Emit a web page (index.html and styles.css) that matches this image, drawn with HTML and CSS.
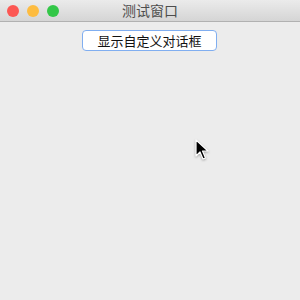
FILE: index.html
```html
<!DOCTYPE html>
<html>
<head>
<meta charset="utf-8">
<link rel="stylesheet" href="styles.css">
</head>
<body>
<div class="window">
  <div class="titlebar">
    <div class="lights">
      <span class="light red"></span>
      <span class="light yellow"></span>
      <span class="light green"></span>
    </div>
    <div class="title">测试窗口</div>
  </div>
  <div class="content">
    <button class="btn">显示自定义对话框</button>
  </div>
  <svg class="cursor" width="14" height="22" viewBox="0 0 14 22">
    <path d="M1 1 L1 17 L5 13 L8 20 L10.5 19 L7.5 12 L13 12 Z" fill="#000" stroke="#fff" stroke-width="1.2" stroke-linejoin="round"/>
  </svg>
</div>
</body>
</html>
```
FILE: styles.css
```css
html, body {
  margin: 0;
  padding: 0;
  background: #ececec;
}
.window {
  position: relative;
  width: 300px;
  height: 300px;
  background: #ececec;
  font-family: "Noto Sans CJK SC", "Noto Sans", sans-serif;
}
.titlebar {
  position: relative;
  height: 21px;
  background: linear-gradient(#ebebeb, #d5d5d5);
  border-bottom: 1px solid #b1b1b1;
  display: flex;
  align-items: center;
  justify-content: center;
}
.lights {
  position: absolute;
  left: 7px;
  top: 5px;
  display: flex;
  gap: 8px;
}
.light {
  width: 12px;
  height: 12px;
  border-radius: 50%;
  display: block;
}
.red { background: #fc5753; }
.yellow { background: #fdbc40; }
.green { background: #33c748; }
.title {
  font-size: 14px;
  color: #4d4d4d;
  line-height: 21px;
}
.content {
  display: flex;
  justify-content: center;
  padding-top: 8px;
}
.btn {
  width: 135px;
  height: 21px;
  margin-left: -1px;
  background: #fff;
  border: 1px solid #80aef0;
  border-radius: 4px;
  font-family: "Noto Sans CJK SC", "Noto Sans", sans-serif;
  font-size: 13px;
  color: #111;
  padding: 0;
  line-height: 19px;
}
.cursor {
  position: absolute;
  left: 195px;
  top: 139px;
  filter: drop-shadow(0 1px 1px rgba(0,0,0,0.3));
}
```
